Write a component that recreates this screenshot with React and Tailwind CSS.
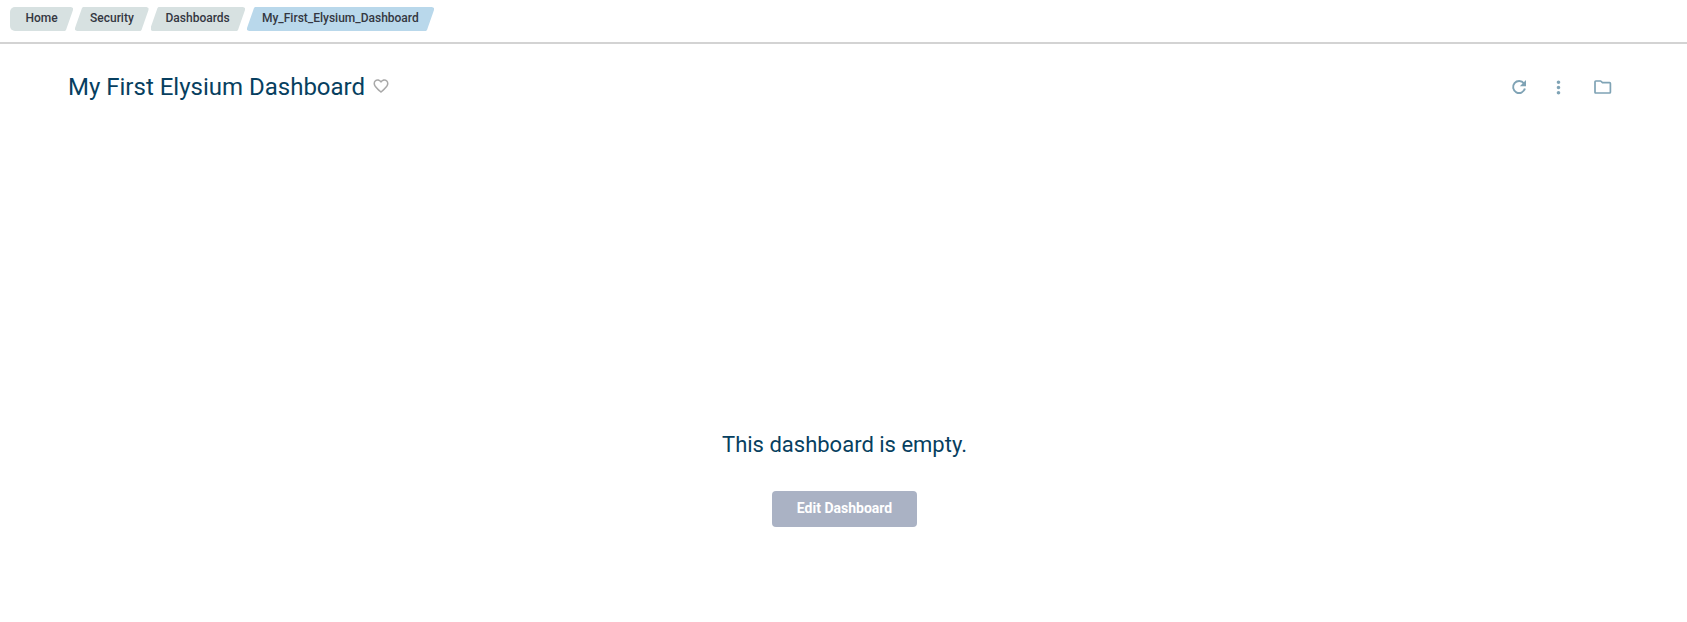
import { MdFavoriteBorder, MdMoreVert } from "react-icons/md";

const middleShape =
  "[clip-path:polygon(7px_1px,8px_0,calc(100%_-_2px)_0,100%_1px,100%_3px,calc(100%_-_7px)_calc(100%_-_1px),calc(100%_-_8px)_100%,2px_100%,0_calc(100%_-_1px),0_calc(100%_-_3px))]";
const firstShape =
  "rounded-l-[5px] [clip-path:polygon(0_0,calc(100%_-_2px)_0,100%_1px,100%_3px,calc(100%_-_7px)_calc(100%_-_1px),calc(100%_-_8px)_100%,0_100%)]";

const crumbs = [
  { label: "Home", style: `w-[63.5px] pl-4 bg-[#d7e1e1] ${firstShape}` },
  { label: "Security", style: `w-[73.5px] pl-[15px] bg-[#d7e1e1] ${middleShape}` },
  { label: "Dashboards", style: `w-[94.5px] pl-[15px] bg-[#d7e1e1] ${middleShape}` },
  { label: "My_First_Elysium_Dashboard", style: `w-[187px] pl-[15px] bg-[#b9d8eb] ${middleShape}` },
];

function RefreshIcon() {
  return (
    <svg viewBox="0 0 16 16" className="size-4" fill="none" stroke="currentColor" strokeWidth="1.9">
      <path d="M12.9 4.4A6 6 0 1 0 13.9 9.6" />
      <path d="M15 1v6.2H8.8z" fill="currentColor" stroke="none" />
    </svg>
  );
}

function FolderIcon() {
  return (
    <svg viewBox="0 0 18 16" className="h-4 w-[18px]" fill="none" stroke="currentColor" strokeWidth="1.7" strokeLinejoin="round">
      <path d="M1.8 2h4.9l1.8 1.7h7.1q.8 0 .8.8v8.7q0 .8-.8.8H1.8q-.8 0-.8-.8V2.8q0-.8.8-.8z" />
    </svg>
  );
}

export default function App() {
  return (
    <div className="flex h-[622px] flex-col bg-white font-[Roboto,sans-serif]">
      <nav className="h-11 border-b-2 border-[#d3d3d3] pl-[9.5px] pt-[7px]">
        <ol className="flex gap-0.5">
          {crumbs.map((c) => (
            <li key={c.label} className={`h-6 text-[12px] leading-[22px] font-medium whitespace-nowrap text-[#343741] ${c.style}`}>
              {c.label}
            </li>
          ))}
        </ol>
      </nav>
      <header className="flex h-[86px] items-center justify-between pl-[68px] pr-[75px]">
        <div className="flex items-center">
          <h1 className="text-[24px] leading-8 text-[#073f60]">My First Elysium Dashboard</h1>
          <MdFavoriteBorder className="mb-0.5 ml-[7px] size-[18px] text-[#a9a9a9]" />
        </div>
        <div className="flex items-center text-[#7fa3b5]">
          <RefreshIcon />
          <MdMoreVert className="mr-[25px] ml-[21px] size-[21px]" />
          <FolderIcon />
        </div>
      </header>
      <main className="flex flex-col items-center pt-[299px] pl-0.5">
        <p className="text-[22px] leading-8 text-[#073f60]">This dashboard is empty.</p>
        <button className="mt-[30px] h-9 w-[145px] rounded-[4px] bg-[#aab2c4] pb-0.5 text-[14px] font-bold text-white">
          Edit Dashboard
        </button>
      </main>
    </div>
  );
}
